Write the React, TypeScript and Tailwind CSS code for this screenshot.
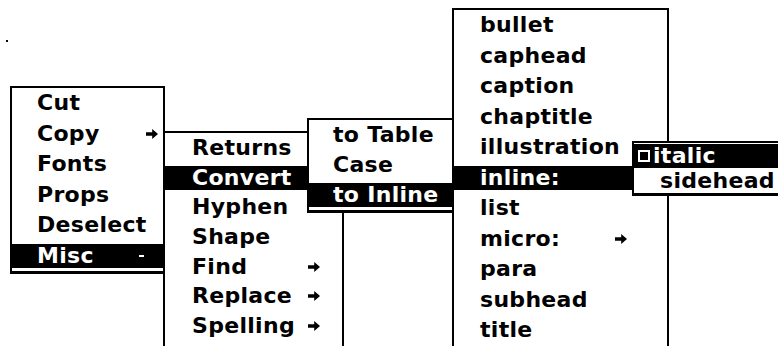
type Item = {
  label: string;
  arrow?: boolean;
  selected?: boolean;
  mark?: boolean;
  check?: boolean;
};

function Arrow({ white }: { white?: boolean }) {
  return (
    <svg width="12" height="10" viewBox="0 0 12 10" className="shrink-0">
      <path d="M0 3.2H6.2V0L12 5L6.2 10V6.8H0Z" fill={white ? "#fff" : "#000"} />
    </svg>
  );
}

type MenuProps = {
  className: string;
  rowClass: string;
  padClass: string;
  items: Item[];
};

function Menu({ className, rowClass, padClass, items }: MenuProps) {
  return (
    <div className={`absolute border-2 border-black bg-white ${className}`}>
      {items.map((item) => (
        <div key={item.label} className={`flex items-center ${rowClass}`}>
          <div
            className={`flex h-[24px] w-full items-center justify-between leading-[24px] ${
              item.check ? "pl-[4px]" : padClass
            } ${item.selected ? "bg-black text-white" : "text-black"}`}
          >
            <span className="flex items-center gap-[3px] whitespace-nowrap">
              {item.check && (
                <span className="box-border h-[12px] w-[12px] border-2 border-white" />
              )}
              {item.label}
            </span>
            {item.arrow && <Arrow white={item.selected} />}
            {item.mark && <span className="mr-[14px] h-[2px] w-[5px] bg-white" />}
          </div>
        </div>
      ))}
    </div>
  );
}

const editMenu: Item[] = [
  { label: "Cut" },
  { label: "Copy", arrow: true },
  { label: "Fonts" },
  { label: "Props" },
  { label: "Deselect" },
  { label: "Misc", selected: true, mark: true },
];

const miscMenu: Item[] = [
  { label: "Returns" },
  { label: "Convert", selected: true },
  { label: "Hyphen" },
  { label: "Shape" },
  { label: "Find", arrow: true },
  { label: "Replace", arrow: true },
  { label: "Spelling", arrow: true },
];

const convertMenu: Item[] = [
  { label: "to Table" },
  { label: "Case" },
  { label: "to Inline", selected: true },
];

const tagMenu: Item[] = [
  { label: "bullet" },
  { label: "caphead" },
  { label: "caption" },
  { label: "chaptitle" },
  { label: "illustration" },
  { label: "inline:", selected: true },
  { label: "list" },
  { label: "micro:", arrow: true },
  { label: "para" },
  { label: "subhead" },
  { label: "title" },
];

const inlineMenu: Item[] = [
  { label: "italic", selected: true, check: true },
  { label: "sidehead" },
];

export default function App() {
  return (
    <div className="relative h-[346px] w-[778px] overflow-hidden bg-white font-['DejaVu_Sans',sans-serif] text-[22px] font-bold tracking-[0.3px] text-black">
      <span className="absolute left-[6px] top-[40px] h-[2px] w-[2px] bg-black" />

      <Menu
        className="left-[10px] top-[86px] w-[155px] border-b-[3px]"
        rowClass="h-[30.5px]"
        padClass="pl-[25px] pr-[5px]"
        items={editMenu}
      />
      <Menu
        className="left-[163px] top-[131px] h-[240px] w-[181px]"
        rowClass="h-[29.7px]"
        padClass="pl-[27px] pr-[22px]"
        items={miscMenu}
      />
      <Menu
        className="left-[307px] top-[118px] w-[147px] border-b-[3px]"
        rowClass="h-[30px]"
        padClass="pl-[24px]"
        items={convertMenu}
      />
      <Menu
        className="left-[452px] top-[8px] h-[360px] w-[217px]"
        rowClass="h-[30.5px]"
        padClass="pl-[26px] pr-[40px]"
        items={tagMenu}
      />
      <Menu
        className="left-[632px] top-[141px] w-[170px] border-b-[3px]"
        rowClass="h-[25px]"
        padClass="pl-[26px]"
        items={inlineMenu}
      />
    </div>
  );
}
